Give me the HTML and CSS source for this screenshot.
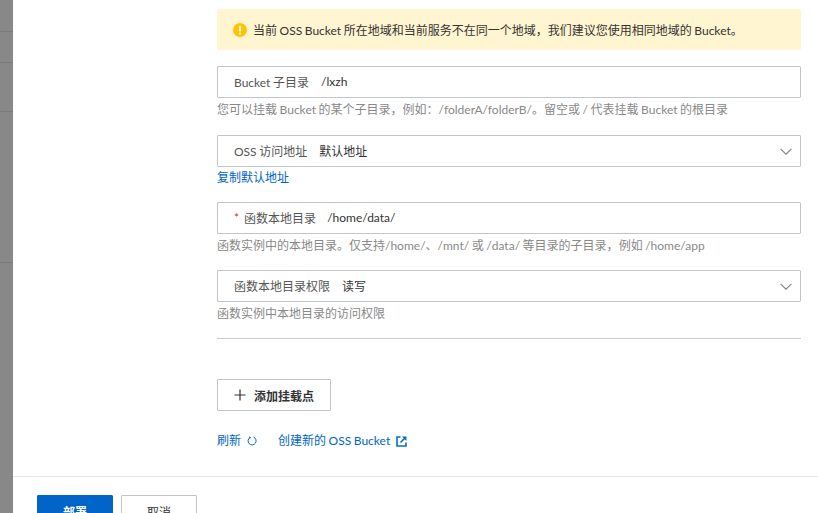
FILE: index.html
```html
<!DOCTYPE html>
<html lang="zh-CN">
<head>
    <meta charset="UTF-8">
    <title>OSS 挂载点</title>
    <link rel="stylesheet" href="styles.css">
</head>
<body>
    <div class="backdrop">
        <div class="backdrop-row row-a"></div>
        <div class="backdrop-row row-b"></div>
        <div class="backdrop-row row-c"></div>
        <div class="backdrop-row row-d"></div>
    </div>

    <div class="panel">
        <div class="panel-body">
            <div class="alert">
                <svg class="alert-icon" width="14" height="14" viewBox="0 0 14 14">
                    <circle cx="7" cy="7" r="7" fill="#ffc400"/>
                    <rect x="6" y="2.8" width="2" height="5.6" rx="0.6" fill="#fff"/>
                    <rect x="6" y="9.4" width="2" height="2" rx="0.6" fill="#fff"/>
                </svg>
                <span>当前 OSS Bucket 所在地域和当前服务不在同一个地域，我们建议您使用相同地域的 Bucket。</span>
            </div>

            <div class="field field-first">
                <span class="label">Bucket 子目录</span>
                <span class="value">/lxzh</span>
            </div>
            <p class="help">您可以挂载 Bucket 的某个子目录，例如：/folderA/folderB/。留空或 / 代表挂载 Bucket 的根目录</p>

            <div class="field field-select field-oss">
                <span class="label">OSS 访问地址</span>
                <span class="value">默认地址</span>
                <svg class="chevron" width="12" height="7" viewBox="0 0 12 7"><path d="M0.6 0.8l5.4 5.4 5.4-5.4" fill="none" stroke="#808894" stroke-width="1.2"/></svg>
            </div>
            <a class="link copy-link" href="#">复制默认地址</a>

            <div class="field field-dir">
                <span class="required">*</span>
                <span class="label">函数本地目录</span>
                <span class="value">/home/data/</span>
            </div>
            <p class="help">函数实例中的本地目录。仅支持/home/、/mnt/ 或 /data/ 等目录的子目录，例如 /home/app</p>

            <div class="field field-select field-perm">
                <span class="label">函数本地目录权限</span>
                <span class="value">读写</span>
                <svg class="chevron" width="12" height="7" viewBox="0 0 12 7"><path d="M0.6 0.8l5.4 5.4 5.4-5.4" fill="none" stroke="#808894" stroke-width="1.2"/></svg>
            </div>
            <p class="help">函数实例中本地目录的访问权限</p>

            <div class="divider"></div>

            <button class="btn btn-add">
                <svg width="12" height="12" viewBox="0 0 12 12"><path d="M6 0.5v11M0.5 6h11" stroke="#333" stroke-width="1.2"/></svg>
                <span>添加挂载点</span>
            </button>

            <div class="links">
                <a class="link" href="#">
                    <span>刷新</span>
                    <svg width="10" height="10" viewBox="0 0 10 10"><path d="M6.6 1.2A4 4 0 1 1 3 1.5" fill="none" stroke="#0064c8" stroke-width="1"/><path d="M2.2 0.2L4.2 1.4L2.6 3z" fill="#0064c8"/></svg>
                </a>
                <a class="link" href="#">
                    <span>创建新的 OSS Bucket</span>
                    <svg width="11" height="11" viewBox="0 0 11 11"><path d="M4.5 1H1v9h9V6.5" fill="none" stroke="#0070cc" stroke-width="1.6"/><path d="M6 0.5h4.5V5z" fill="#0070cc"/><path d="M9 2L4.5 6.5" stroke="#0070cc" stroke-width="1.6"/></svg>
                </a>
            </div>
        </div>

        <div class="panel-footer">
            <button class="btn btn-primary">部署</button>
            <button class="btn btn-cancel">取消</button>
        </div>
    </div>
</body>
</html>
```

FILE: styles.css
```css
html, body {
    height: 100%;
}

body {
    margin: 0;
    height: 513px;
    display: flex;
    overflow: hidden;
    background: #fff;
    color: #333;
    font-family: "Lato", "Noto Sans CJK SC", sans-serif;
    font-size: 12px;
    word-spacing: -0.5px;
}

.backdrop {
    width: 13px;
    flex-shrink: 0;
    background: #888;
}

.backdrop-row {
    border-bottom: 1px solid #7a7a7a;
}

.row-a { height: 31px; }
.row-b { height: 30px; }
.row-c { height: 48px; }
.row-d { height: 150px; }

.panel {
    flex: 1;
    display: flex;
    flex-direction: column;
    min-height: 0;
}

.panel-body {
    height: 477px;
    flex-shrink: 0;
    box-sizing: border-box;
    padding: 9px 17px 0 204px;
    border-bottom: 1px solid #e3e4e6;
}

.alert {
    height: 41px;
    box-sizing: border-box;
    display: flex;
    align-items: center;
    gap: 6px;
    padding-left: 16px;
    background: #fff5d0;
    border-radius: 2px;
    color: #333;
}

.alert-icon {
    flex-shrink: 0;
}

.field {
    height: 32px;
    box-sizing: border-box;
    display: flex;
    align-items: center;
    gap: 12px;
    padding: 0 16px 2px;
    border: 1px solid #c1c4c9;
    border-radius: 1px;
}

.field-first { margin-top: 16px; }
.field-oss { margin-top: 16px; }
.field-dir { margin-top: 15px; gap: 0; }
.field-perm { margin-top: 15px; }

.field-dir .label { margin: 0 11px 0 5px; }

.label {
    color: #555;
}

.value {
    color: #333;
}

.required {
    color: #d93026;
}

.chevron {
    margin-left: auto;
    margin-right: -8px;
    position: relative;
    top: 1px;
}

.help {
    margin: 3px 0 0;
    line-height: 18px;
    color: #888;
}

.link {
    color: #0064c8;
    text-decoration: none;
}

.copy-link {
    display: block;
    margin-top: 2px;
    line-height: 18px;
}

.divider {
    margin-top: 15px;
    border-top: 1px solid #c9cbce;
}

.btn {
    height: 32px;
    box-sizing: border-box;
    font-family: inherit;
    font-size: 12px;
    background: #fff;
    border: 1px solid #c1c4c9;
    border-radius: 1px;
    color: #333;
}

.btn-add {
    display: flex;
    align-items: center;
    gap: 8px;
    width: 114px;
    margin-top: 40px;
    padding: 0 0 0 16px;
    font-weight: 600;
}

.links {
    display: flex;
    gap: 21px;
    margin-top: 21px;
    line-height: 18px;
}

.links .link {
    display: inline-flex;
    align-items: center;
    gap: 6px;
}

.panel-footer {
    display: flex;
    flex-shrink: 0;
    gap: 8px;
    padding: 18px 0 0 24px;
}

.btn-primary,
.btn-cancel {
    width: 76px;
    flex-shrink: 0;
}

.btn-primary {
    background: #0064c8;
    border-color: #0064c8;
    color: #fff;
    font-weight: 600;
}
```
